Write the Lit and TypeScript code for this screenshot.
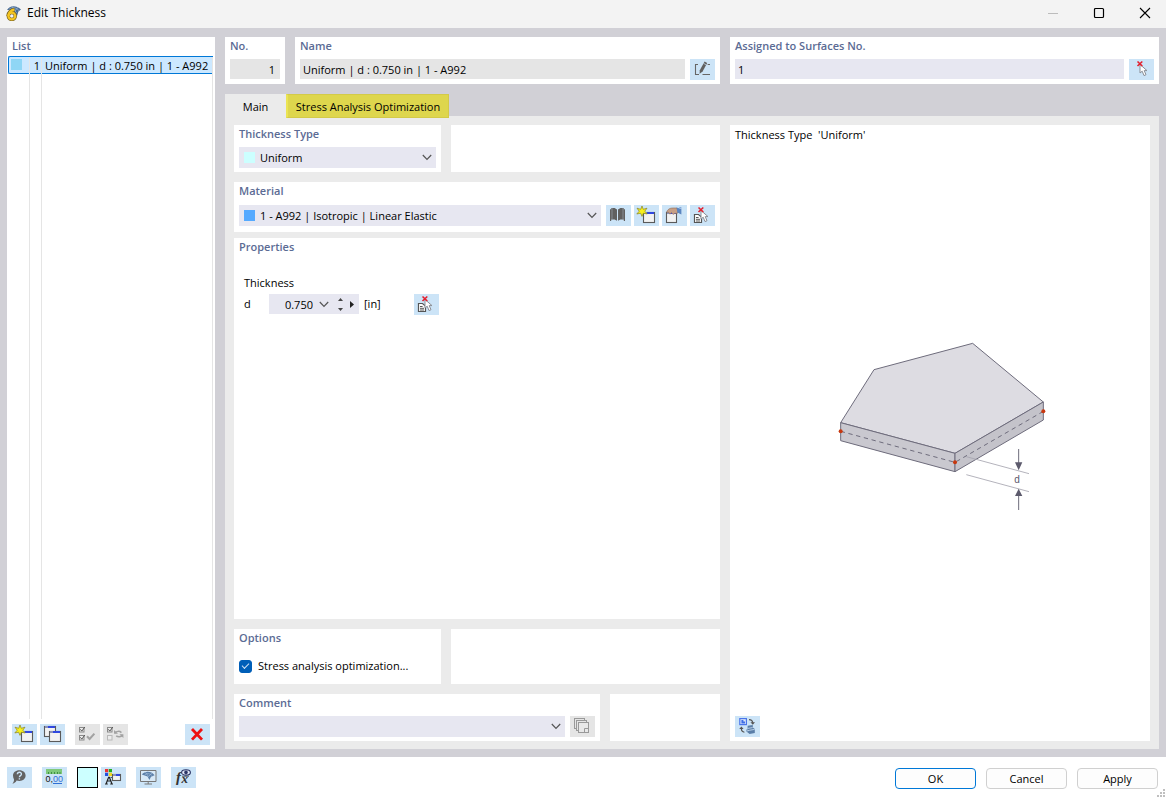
import { LitElement, html, svg, css, nothing, type SVGTemplateResult } from "lit";
import { customElement, property, state } from "lit/decorators.js";

const star = svg`
  <path d="M8 1 L9.3 4.3 L13 3.2 L10.8 6.2 L13.2 9 L9.4 8.2 L8 11.4 L6.6 8.2 L2.8 9 L5.2 6.2 L3 3.2 L6.7 4.3Z"
    fill="#f7f01c" stroke="#8a8420" stroke-width=".7"/>`;

const miniWindow = (x: number, y: number, w = 11, h = 10) => svg`
  <rect x=${x + 0.5} y=${y + 0.5} width=${w} height=${h} fill="#f2f2f2" stroke="#5a5a5a" stroke-width="1.1"/>
  <rect x=${x + 1} y=${y} width=${w - 1} height="2" fill="#8c92b8"/>
  <rect x=${x + 4} y=${y} width=${w - 4} height="2" fill="#3048e0"/>`;

const arrowCursor = svg`
  <path d="M11 5.5V14L13.2 12.2L15 16.6L17 15.7L15.2 11.6H18Z" fill="#fff" stroke="#8b8f96" stroke-width="1"/>`;

const redCross = svg`
  <path d="M8.5 2.5L13.3 7M13.3 2.5L8.5 7" stroke="#e3202e" stroke-width="1.6" fill="none"/>`;

const sheet = svg`
  <path d="M4.5 9.5H8.5L11.5 12V17.5H4.5Z" fill="#fff" stroke="#555" stroke-width="1.2"/>
  <path d="M6 12.5H8.6M6 14.3H10M6 16H10" stroke="#444" stroke-width=".9"/>`;

const tickBox = (x: number, y: number, ticked: boolean) => svg`
  <rect x=${x} y=${y} width="4.5" height="4.5" fill="#ececec" stroke=${ticked ? "#8a8a8a" : "#b8b8b8"} stroke-width="1"/>
  ${ticked ? svg`<path d=${`M${x + 0.8} ${y + 1.8}l1.5 1.8l3 -4`} fill="none" stroke="#555" stroke-width="1"/>` : nothing}`;

const icons: Record<string, SVGTemplateResult> = {
  create: svg`${miniWindow(9, 7)}${star}`,
  duplicate: svg`${miniWindow(4, 2)}${miniWindow(9, 7)}`,
  checkAll: svg`${tickBox(4.5, 3.5, true)}${tickBox(4.5, 11.5, true)}
    <path d="M12 12.2L14.6 15L19.4 9.6" fill="none" stroke="#a2a2a2" stroke-width="2"/>`,
  invert: svg`${tickBox(4.5, 3.5, true)}${tickBox(4.5, 11.5, false)}
    <path d="M12 9C13.4 7 16.6 6.8 18.4 8.6M19.4 11C18 13.2 15 13.2 13.2 11.8" fill="none" stroke="#a2a2a2" stroke-width="1.5"/>
    <path d="M11 6V9.8H15ZM20.4 14V10.2H16.4Z" fill="#a2a2a2"/>`,
  remove: svg`<path d="M7 5L17 15.6M17 5L7 15.6" stroke="#ee1111" stroke-width="2.8" fill="none"/>`,
  help: svg`<path d="M12.4 3.2C16.2 3.2 18.6 5.6 18.6 8.6C18.6 11.8 16 14 12.4 14C11.4 14 10.4 13.8 9.6 13.5C8.8 15.2 7.4 16.2 5.4 16.8C6.6 15.4 7 14 7 12.4C6.4 11.3 6 10 6 8.6C6 5.6 8.6 3.2 12.4 3.2Z" fill="#636363"/>
    <path d="M10.4 7.2C10.4 4.6 14.6 4.6 14.4 7.2C14.3 8.6 12.4 8.6 12.4 10.2M12.4 11.2V12.6" fill="none" stroke="#cce4f7" stroke-width="1.4"/>`,
  decimals: svg`<rect x="4" y="2" width="16" height="5" fill="#7fc97b"/>
    <path d="M6.5 5V7M9.5 5V7M12.5 5V7M15.5 5V7M18 5V7" stroke="#3f8f45" stroke-width="1"/>
    <text x="3.6" y="15" font-size="9" font-family="Liberation Sans, sans-serif" fill="#111">0,<tspan fill="#2f6fd6">00</tspan></text>
    <path d="M11 16.5H20" stroke="#2f6fd6" stroke-width="1"/>`,
  display: svg`<rect x="4" y="2" width="3.2" height="3.2" fill="#e33"/><rect x="7.8" y="2" width="3.2" height="3.2" fill="#2a2"/>
    <rect x="4" y="5.8" width="3.2" height="3.2" fill="#2452e0"/><rect x="7.8" y="5.8" width="3.2" height="3.2" fill="#f4d620"/>
    <path d="M5.2 16.5L7.6 10.4H8.4L10.8 16.5M6 14H10M4 17H6.8M9.2 17H12" fill="none" stroke="#222" stroke-width="1.2"/>
    <path d="M9.5 10.5H12" stroke="#555"/>${miniWindow(11, 7, 8, 6)}`,
  monitor: svg`<path d="M4.5 3.5H20V14.5H4.5Z" fill="#d8e9f7" stroke="#777" stroke-width="1"/>
    <path d="M12.2 14.5V17M8.5 17H16" stroke="#777" stroke-width="1"/>
    <path d="M5.8 7.4C9 3.6 15.4 3.8 18.6 8.2L15 9.8L13.4 13L11.6 9.4Z" fill="#5c7fa8"/>
    <path d="M8.6 8.2C10 6 13.8 6 16.4 9M9.4 5.2L12.6 9.6L16 5.8" fill="none" stroke="#a9c3de" stroke-width=".6"/>`,
  formula: svg`<text x="5" y="15" font-size="15" font-style="italic" font-weight="bold" font-family="Liberation Serif, serif" fill="#333">f</text>
    <text x="10.5" y="15.5" font-size="13" font-style="italic" font-weight="bold" font-family="Liberation Serif, serif" fill="#333">x</text>
    <path d="M11 9.2H18" stroke="#333" stroke-width=".8"/>
    <ellipse cx="15" cy="5.4" rx="4.4" ry="2.7" fill="#dfe6f5" stroke="#2b3566" stroke-width="1.1"/>
    <circle cx="15" cy="5.4" r="1.8" fill="#2b3566"/>`,
  library: svg`<path d="M4 4.2H5.2V3H8.6L11 4.6V15.8L8.6 14.4H5.2V16H4ZM19 4.2H17.8V3H14.4L12 4.6V15.8L14.4 14.4H17.8V16H19Z" fill="#606060"/>
    <path d="M6 3V14.4M17 3V14.4" stroke="#a3adb5" stroke-width=".6"/>`,
  modify: svg`${miniWindow(4, 7, 10, 10)}
    <path d="M4.6 7.2C5.4 4.4 8 2.8 11 3H15L16 8L12.4 8.6L11 9.4L9.4 7.6L8 9.2L6.8 7.4Z" fill="#c79f86" stroke="#8d6b58" stroke-width=".6"/>
    <path d="M14.6 2.6L19.4 4V9.4L15.4 7.6Z" fill="#5b85c0"/><path d="M16.6 2H19.4V4Z" fill="#86a9d8"/>`,
  pickItem: svg`${sheet}${arrowCursor}${redCross}`,
  pick: svg`${arrowCursor}${redCross}`,
  rename: svg`<path d="M8 5.5H5.5V15.5H9M12.5 15.5H20M17.6 5.5H20" fill="none" stroke="#666" stroke-width="1.1"/>
    <path d="M14.6 2.6L17.2 4L12.6 12.6L9.6 14.8L9.8 11.2Z" fill="#606060"/><path d="M13.6 4.4L16.2 5.8" stroke="#cce4f7" stroke-width=".7"/>`,
  notes: svg`<rect x="4.5" y="2.5" width="10" height="10" fill="#e5e5e5" stroke="#999"/>
    <rect x="6.5" y="4.5" width="10" height="10" fill="#e5e5e5" stroke="#999"/>
    <rect x="8.5" y="6.5" width="10" height="10" fill="#e8e8e8" stroke="#999"/>
    <path d="M14.5 16V12.5H18" fill="none" stroke="#999"/>`,
  swapView: svg`<rect x="4.8" y="2.6" width="6.6" height="6" fill="#dce8fb" stroke="#4a76ea" stroke-width="1.2"/>
    <path d="M6.4 4V7.4H10V5.6H8.4V4Z" fill="#3f6fe6"/>
    <path d="M14 3.6C16.6 3.6 17.6 4.6 17.8 7M6.4 12V13C6.4 15 7.6 16 9.4 16.2" fill="none" stroke="#555" stroke-width="1.1"/>
    <path d="M15.4 6.2H20L17.8 8.8ZM4.2 13H8.6L6.4 10.4Z" fill="#555"/>
    <path d="M12.6 9.8L17.8 9V11.6L19.8 13V17L14.6 18L11.4 15.6V13.4H12.6Z" fill="#5a7ea8"/>
    <path d="M12.8 12.4L17.6 11.6M11.8 15L14.8 14.2L19.6 13.4" stroke="#c4d9ee" stroke-width=".9" fill="none"/>`,
};

@customElement("icon-button")
class IconButton extends LitElement {
  @property() icon = "";
  @property() label = "";
  @property({ type: Boolean }) disabled = false;

  static styles = css`
    :host { display: block; flex: none; }
    button {
      display: block; width: 25px; height: 21px; padding: 0; border: 0;
      background: #cce4f7;
    }
    button:hover:enabled { background: #b5d8f3; }
    button:disabled { background: #e5e5e5; }
    svg { display: block; width: 25px; height: 21px; }
  `;

  render() {
    return html`<button type="button" aria-label=${this.label} ?disabled=${this.disabled}>
      <svg viewBox="0 0 25 21" aria-hidden="true">${icons[this.icon]}</svg>
    </button>`;
  }
}

@customElement("thickness-figure")
class ThicknessFigure extends LitElement {
  static styles = css`
    :host { display: block; }
    svg { display: block; width: 212px; height: 170px; }
    .edge { stroke: #6e6c7c; stroke-width: 3; stroke-linejoin: round; }
    .axis { stroke: #6e6c7c; stroke-width: 3; stroke-dasharray: 13 11; fill: none; }
    .guide { stroke: #a5a4ae; stroke-width: 2.5; fill: none; }
    .arrow { stroke: #6e6c7c; stroke-width: 3; }
    .head { fill: #5c5a6c; }
    .node { fill: #c8380f; }
    text { font: 30px "Liberation Sans", sans-serif; fill: #5c5a6c; }
  `;

  render() {
    return html`<svg viewBox="12 36 636 510" role="img" aria-label="Plate of uniform thickness d">
      <path class="edge" fill="#dddce2" d="M32 278L132 119L428 40L640 216L375 370Z"/>
      <path class="edge" fill="#c9c8cf" d="M32 278L375 370V425L32 332Z"/>
      <path class="edge" fill="#c4c3ca" d="M375 370L640 216V270L375 425Z"/>
      <path class="axis" d="M32 304L375 397L640 244"/>
      <path class="guide" d="M409 380L597 431M409 434L597 485"/>
      <path class="arrow" d="M566 357V405M566 490V540"/>
      <path class="head" d="M555 397H577L566 421ZM555 498H577L566 476Z"/>
      <circle class="node" cx="32" cy="304" r="6"/>
      <circle class="node" cx="375" cy="397" r="6"/>
      <circle class="node" cx="640" cy="244" r="6"/>
      <text x="553" y="459">d</text>
    </svg>`;
  }
}

@customElement("app-root")
class AppRoot extends LitElement {
  @state() private optimize = true;

  static styles = css`
    :host {
      display: flex; flex-direction: column; height: 100vh; overflow: hidden;
      background: #fff; color: #000;
      font: 11px/16px "Open Sans", "Noto Sans", sans-serif;
    }
    * { box-sizing: border-box; }
    button, input, select { font: inherit; color: inherit; margin: 0; border-radius: 0; }

    .titlebar { display: flex; align-items: center; height: 28px; flex: none; background: #f3f3f3; padding: 0 9px 3px 6px; }
    .titlebar h1 { flex: 1; margin: 0 0 0 6px; font-size: 12px; font-weight: 400; }
    .logo { width: 15px; height: 16px; }
    .caption { display: grid; place-items: center; width: 24px; height: 24px; padding: 0; border: 0; background: none; }
    .captions { display: flex; gap: 22px; }
    .caption svg { width: 12px; height: 12px; }

    .workspace {
      flex: 1; min-height: 0; display: grid; grid-template-columns: 208px minmax(0, 1fr); gap: 10px;
      padding: 9px 7px 8px; background: #d1d0d6;
    }
    .panel { background: #fff; padding: 0 5px 4px; display: flex; flex-direction: column; min-width: 0; }
    .head { margin: 0; padding-top: 1px; height: 22px; flex: none; font-size: 11px; font-weight: 600; color: #5b6b94; display: block; }

    .list .head { height: 19px; padding-left: 5px; }
    .list { padding: 0 0 4px; }
    .rows { flex: 1; min-height: 0; display: grid; grid-template-rows: 18px minmax(0, 1fr); padding: 0 1px; }
    .row { display: grid; grid-template-columns: 22px 12px minmax(0, 1fr); padding-right: 0; margin-right: 1px; }
    .row > span { border-right: 1px solid #e5e5e5; white-space: nowrap; line-height: 18px; }
    .row.selected { background: #cce8ff; border: solid #0078d7; border-width: 1px 0 1px 1px; border-radius: 2px 0 0 2px; grid-template-columns: 21px 12px minmax(0, 1fr); }
    .row.selected > .number { text-align: right; padding-right: 1px; }
    .row.selected > .title { padding-left: 3px; }
    .row .swatch { display: block; margin: 2px; background: #8fd6f5; }
    .tools { display: flex; gap: 3px; padding: 5px 5px 0; }
    .tools .second { margin-left: 7px; }
    .tools .last { margin-left: auto; }

    .swatch { width: 11px; height: 11px; flex: none; }
    .details { display: flex; flex-direction: column; gap: 10px; min-width: 0; min-height: 0; }
    .summary { display: grid; grid-template-columns: minmax(0, 495fr) minmax(0, 429fr); gap: 10px; }
    .pair { display: flex; gap: 10px; }
    .no { flex: 0 0 60px; }
    .grow { flex: 1; }
    .line { display: flex; gap: 5px; align-items: flex-start; }
    .set { display: flex; gap: 3px; }
    .text { flex: none; width: 100%; height: 20px; border: 0; padding: 1px 3px 0; background: #e7e7f1; outline: 0; }
    .line .text { flex: 1; min-width: 0; }
    .text[readonly] { background: #e5e5e5; }
    .no .text { text-align: right; padding-right: 5px; }

    .book { flex: 1; min-height: 0; display: flex; flex-direction: column; }
    .tabs { display: flex; height: 22px; align-items: stretch; }
    .tab { border: 0; background: #ebebeb; padding: 3px 0 0; flex: 0 0 61px; }
    .tab.marked { flex: 0 0 163px; background: #ded64d; border: 1px solid #d3ca48; border-left: 2px solid #ebe453; height: 24px; padding: 1px 0 0; z-index: 1; }
    .page {
      flex: 1; min-height: 0; display: grid; grid-template-columns: minmax(0, 486fr) minmax(0, 420fr); gap: 10px;
      padding: 9px 9px 8px; background: #ebebeb;
    }
    .form { display: flex; flex-direction: column; gap: 10px; min-height: 0; }
    .narrow { flex: 0 0 207px; }
    .short { flex: 0 0 110px; }
    .stack { flex: 1; display: flex; flex-direction: column; gap: 6px; min-height: 0; }
    .material { padding-bottom: 6px; }
    .material .head { height: 23px; }

    .combo { position: relative; flex: 1; min-width: 0; height: 21px; display: flex; align-items: center; background: #e7e7f1; }
    .narrow .combo { flex: none; }
    .combo .swatch { margin-left: 5px; }
    .combo select { flex: 1; min-width: 0; height: 21px; border: 0; padding: 1px 22px 0 5px; background: none; appearance: none; outline: 0; }
    .combo .chevron { position: absolute; right: 4px; top: 7px; pointer-events: none; }
    .chevron { width: 10px; height: 7px; fill: none; stroke: #555; stroke-width: 1.2; }
    .uniform { background: #ccffff; }
    .steel { background: #55aaff; }
    .properties { flex: 1; }
    .thickness { padding: 15px 5px 0; display: flex; flex-direction: column; gap: 3px; }
    .value { display: grid; grid-template-columns: 25px 90px 55px auto; align-items: start; height: 21px; }
    .value > label, .value > .unit { padding-top: 2px; }
    .value .unit { padding-left: 5px; }
    .spin { display: flex; align-items: center; height: 20px; background: #e7e7f1; padding-right: 2px; }
    .spin input { width: 48px; height: 20px; padding: 1px 4px 0 0; border: 0; background: none; text-align: right; outline: 0; }
    .spin button { display: grid; place-items: center; padding: 0; border: 0; background: none; width: 13px; height: 20px; }
    .spin .steps { display: flex; flex-direction: column; padding-left: 3px; }
    .spin .steps button { height: 10px; }
    .spin .drop { width: 14px; }
    .spin .more { width: 10px; }
    .options { height: 55px; }
    .check { display: flex; align-items: center; gap: 6px; padding-top: 6px; line-height: 18px; }
    .check input {
      appearance: none; width: 13px; height: 13px; border-radius: 3px; border: 1px solid #005fb8; background: #fff;
      display: grid; place-items: center;
    }
    .check input:checked { background: #005fb8; }
    .check input:checked::after { content: ""; width: 6px; height: 3px; border: solid #cfe2f5; border-width: 0 0 1px 1px; rotate: -45deg; margin-bottom: 2px; }

    .preview p { margin: 0; padding-top: 2px; white-space: pre; }
    .stage { flex: 1; display: grid; place-items: center; min-height: 0; padding-bottom: 6px; }

    .footer { flex: none; height: 40px; display: flex; align-items: center; padding: 0 8px 0 7px; gap: 10px; position: relative; }
    .cluster { display: flex; gap: 3px; }
    .color { width: 21px; height: 21px; border: 1px solid #000; background: #ccffff; padding: 0; }
    .actions { margin-left: auto; display: flex; gap: 10px; padding-top: 2px; }
    .action { width: 81px; height: 21px; padding: 1px 0 0; border: 1px solid #d0d0d0; border-radius: 4px; background: #fdfdfd; }
    .action.primary { border-color: #0078d7; }
    .grip { position: absolute; right: 1px; bottom: 0; width: 9px; height: 9px; fill: #bfbfbf; }
  `;

  private chevron() {
    return html`<svg class="chevron" viewBox="0 0 10 7" aria-hidden="true"><path d="M.8 1L5 5.4L9.2 1"/></svg>`;
  }

  render() {
    return html`
      <header class="titlebar">
        <svg class="logo" viewBox="0 0 15 16" aria-hidden="true">
          <path d="M1 5C3.5 .6 9.5 -.6 15 4.4L12.4 6.6L11 11L6 5Z" fill="#4a6c96"/>
          <path d="M3 4.4C6 1.6 10 2.4 13 5.6M6 1.6L10.6 8M12 2L9 6" fill="none" stroke="#9db8d4" stroke-width=".7"/>
          <path d="M8.4 4.6C5.4 4.8 2.4 7 2.2 11" fill="none" stroke="#7a6420" stroke-width="3.6"/>
          <circle cx="5.8" cy="11" r="3.5" fill="none" stroke="#7a6420" stroke-width="3.4"/>
          <path d="M8.4 4.8C5.4 5 2.6 7.2 2.4 11" fill="none" stroke="#f4c522" stroke-width="2.4"/>
          <circle cx="5.8" cy="11" r="3.4" fill="none" stroke="#f4c522" stroke-width="2.2"/>
        </svg>
        <h1>Edit Thickness</h1>
        <div class="captions">
          <button class="caption" aria-label="Minimize" disabled><svg viewBox="0 0 12 12"><path d="M1 6.5H11" stroke="#bcbcbc"/></svg></button>
          <button class="caption" aria-label="Maximize"><svg viewBox="0 0 12 12"><rect x="1.5" y="1.5" width="9" height="9" rx="1" fill="none" stroke="#000" stroke-width="1.2"/></svg></button>
          <button class="caption" aria-label="Close"><svg viewBox="0 0 12 12"><path d="M1 1L11 11M11 1L1 11" stroke="#000" stroke-width="1.1"/></svg></button>
        </div>
      </header>

      <main class="workspace">
        <section class="panel list">
          <h2 class="head">List</h2>
          <div class="rows">
            <div class="row selected">
              <span><i class="swatch"></i></span><span class="number">1</span><span class="title">Uniform | d : 0.750 in | 1 - A992</span>
            </div>
            <div class="row" aria-hidden="true"><span></span><span></span><span></span></div>
          </div>
          <div class="tools">
            <icon-button icon="create" label="New thickness"></icon-button>
            <icon-button icon="duplicate" label="Copy thickness"></icon-button>
            <icon-button class="second" icon="checkAll" label="Select all" disabled></icon-button>
            <icon-button icon="invert" label="Invert selection" disabled></icon-button>
            <icon-button class="last" icon="remove" label="Delete"></icon-button>
          </div>
        </section>

        <div class="details">
          <div class="summary">
            <div class="pair">
              <section class="panel no">
                <label class="head" for="no">No.</label>
                <input class="text" id="no" readonly .value=${"1"}>
              </section>
              <section class="panel grow">
                <label class="head" for="name">Name</label>
                <div class="line">
                  <input class="text" id="name" readonly .value=${"Uniform | d : 0.750 in | 1 - A992"}>
                  <icon-button icon="rename" label="Edit name"></icon-button>
                </div>
              </section>
            </div>
            <section class="panel">
              <label class="head" for="surfaces">Assigned to Surfaces No.</label>
              <div class="line">
                <input class="text" id="surfaces" .value=${"1"}>
                <icon-button icon="pick" label="Select surfaces"></icon-button>
              </div>
            </section>
          </div>

          <div class="book">
            <div class="tabs" role="tablist">
              <button class="tab" role="tab" aria-selected="true">Main</button>
              <button class="tab marked" role="tab" aria-selected="false">Stress Analysis Optimization</button>
            </div>
            <div class="page">
              <div class="form">
                <div class="pair">
                  <section class="panel narrow">
                    <label class="head" for="type">Thickness Type</label>
                    <div class="combo">
                      <i class="swatch uniform"></i>
                      <select id="type"><option>Uniform</option></select>
                      ${this.chevron()}
                    </div>
                  </section>
                  <div class="panel grow"></div>
                </div>
                <div class="stack">
                  <section class="panel material">
                    <label class="head" for="material">Material</label>
                    <div class="line">
                      <div class="combo">
                        <i class="swatch steel"></i>
                        <select id="material"><option>1 - A992 | Isotropic | Linear Elastic</option></select>
                        ${this.chevron()}
                      </div>
                      <div class="set">
                        <icon-button icon="library" label="Material library"></icon-button>
                        <icon-button icon="create" label="New material"></icon-button>
                        <icon-button icon="modify" label="Edit material"></icon-button>
                        <icon-button icon="pickItem" label="Pick material"></icon-button>
                      </div>
                    </div>
                  </section>
                  <section class="panel properties">
                    <h2 class="head">Properties</h2>
                    <div class="thickness">
                      <span>Thickness</span>
                      <div class="value">
                        <label for="d">d</label>
                        <div class="spin">
                          <input id="d" .value=${"0.750"}>
                          <button class="drop" aria-label="Recent values">${this.chevron()}</button>
                          <div class="steps">
                            <button aria-label="Increase"><svg width="5" height="3" viewBox="0 0 5 3"><path d="M0 3L2.5 0L5 3Z" fill="#444"/></svg></button>
                            <button aria-label="Decrease"><svg width="5" height="3" viewBox="0 0 5 3"><path d="M0 0L2.5 3L5 0Z" fill="#444"/></svg></button>
                          </div>
                          <button class="more" aria-label="More"><svg width="4" height="7" viewBox="0 0 4 7"><path d="M0 0L4 3.5L0 7Z" fill="#222"/></svg></button>
                        </div>
                        <span class="unit">[in]</span>
                        <icon-button icon="pickItem" label="Pick thickness"></icon-button>
                      </div>
                    </div>
                  </section>
                </div>
                <div class="pair">
                  <section class="panel narrow options">
                    <h2 class="head">Options</h2>
                    <label class="check">
                      <input type="checkbox" .checked=${this.optimize}
                        @change=${(e: Event) => (this.optimize = (e.target as HTMLInputElement).checked)}>
                      Stress analysis optimization...
                    </label>
                  </section>
                  <div class="panel grow"></div>
                </div>
                <div class="pair">
                  <section class="panel grow">
                    <label class="head" for="comment">Comment</label>
                    <div class="line">
                      <div class="combo">
                        <select id="comment"><option></option></select>
                        ${this.chevron()}
                      </div>
                      <icon-button icon="notes" label="Comment templates" disabled></icon-button>
                    </div>
                  </section>
                  <div class="panel short"></div>
                </div>
              </div>

              <section class="panel preview">
                <p>Thickness Type  'Uniform'</p>
                <div class="stage"><thickness-figure></thickness-figure></div>
                <icon-button icon="swapView" label="Switch view"></icon-button>
              </section>
            </div>
          </div>
        </div>
      </main>

      <footer class="footer">
        <icon-button icon="help" label="Help"></icon-button>
        <icon-button icon="decimals" label="Units and decimal places"></icon-button>
        <div class="cluster">
          <button class="color" aria-label="Color"></button>
          <icon-button icon="display" label="Display properties"></icon-button>
        </div>
        <icon-button icon="monitor" label="View"></icon-button>
        <icon-button icon="formula" label="Formula"></icon-button>
        <div class="actions">
          <button class="action primary">OK</button>
          <button class="action">Cancel</button>
          <button class="action">Apply</button>
        </div>
        <svg class="grip" viewBox="0 0 9 9" aria-hidden="true"><path d="M7 1h2v2h-2zM4 4h2v2h-2zM7 4h2v2h-2zM1 7h2v2h-2zM4 7h2v2h-2zM7 7h2v2h-2z"/></svg>
      </footer>
    `;
  }
}
